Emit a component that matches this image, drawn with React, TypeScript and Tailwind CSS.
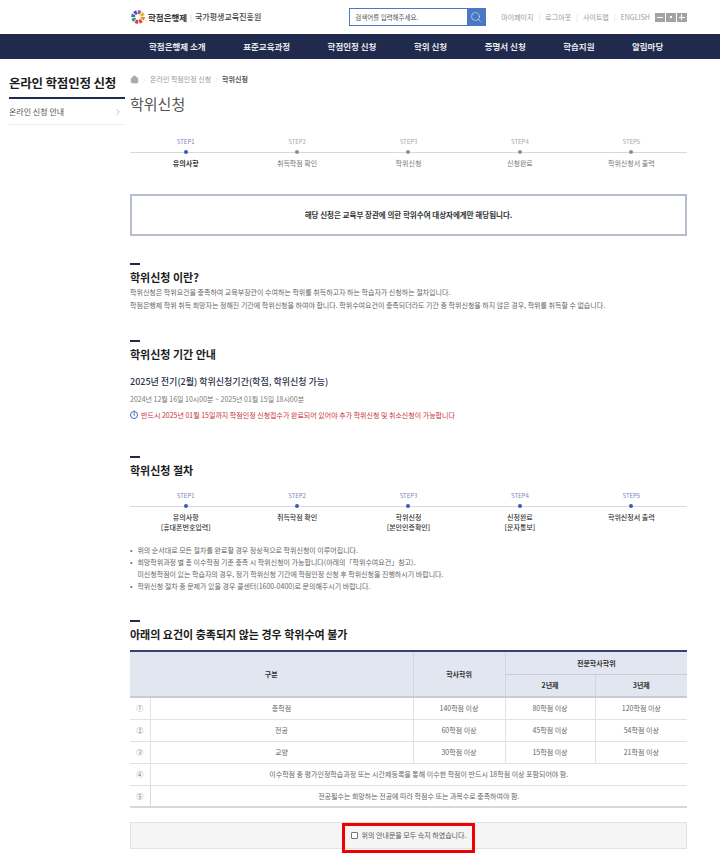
import { ChevronRight, Home, Search } from "lucide-react";

const navItems = ["학점은행제 소개", "표준교육과정", "학점인정 신청", "학위 신청", "증명서 신청", "학습지원", "알림마당"];

const topSteps = ["유의사항", "취득학점 확인", "학위신청", "신청완료", "학위신청서 출력"];

const procedure = [
  ["유의사항", "[휴대폰번호입력]"],
  ["취득학점 확인"],
  ["학위신청", "[본인인증확인]"],
  ["신청완료", "[문자통보]"],
  ["학위신청서 출력"],
];

const petals = ["#6d3fa0", "#8e5bb5", "#e8b31c", "#ef8a1d", "#e2452f", "#d8327a", "#3f9b45", "#2f74c0"];

function Logo() {
  return (
    <svg width="16" height="16" viewBox="0 0 32 32">
      {petals.map((color, i) => (
        <g key={color} transform={`rotate(${i * 45 - 30} 16 16)`}>
          <path d="M12.5 2.5 L19.5 2.5 L18.5 9 L16 11 L13.5 9 Z" fill={color} />
        </g>
      ))}
    </svg>
  );
}

function Heading({ children }: { children: React.ReactNode }) {
  return (
    <div>
      <div className="h-[2px] w-[10px] bg-[#1f2a4d]" />
      <h2 className="mt-[3px] text-[11px] leading-[18px] font-bold text-[#1b1b1b]">{children}</h2>
    </div>
  );
}

function StepRow() {
  return (
    <div className="relative grid grid-cols-5 text-center">
      <div className="absolute left-0 right-0 top-[16px] h-px bg-[#d9d9d9]" />
      {topSteps.map((label, i) => {
        const on = i === 0;
        return (
          <div key={label} className="relative flex flex-col items-center">
            <div className={`text-[6px] leading-[12px] ${on ? "text-[#7d86c0]" : "text-[#a9a9a9]"}`}>STEP{i + 1}</div>
            <div className={`mt-[2px] size-[4px] rounded-full ${on ? "bg-[#2f5fb8]" : "bg-[#8f8f8f]"}`} />
            <div className={`mt-[3px] text-[7px] leading-[12px] ${on ? "font-bold text-[#333]" : "text-[#777]"}`}>{label}</div>
          </div>
        );
      })}
    </div>
  );
}

function ProcedureRow() {
  return (
    <div className="relative grid grid-cols-5 text-center">
      <div className="absolute left-0 right-0 top-[16px] h-px bg-[#d9d9d9]" />
      {procedure.map((lines, i) => (
        <div key={lines[0]} className="relative flex flex-col items-center">
          <div className="text-[6px] leading-[12px] text-[#7d86c0]">STEP{i + 1}</div>
          <div className="mt-[2px] size-[4px] rounded-full bg-[#2f5fb8]" />
          <div className="mt-[4px] text-[7px] leading-[10px] font-medium text-[#333]">
            {lines.map((line) => (
              <div key={line}>{line}</div>
            ))}
          </div>
        </div>
      ))}
    </div>
  );
}

const cell = "border-b border-l border-[#e2e2e2] text-center font-normal text-[#666]";
const head = "border-l border-[#d3d6e0] text-center font-bold text-[#333]";

export default function App() {
  return (
    <div className="h-[868px] w-[720px] overflow-hidden bg-white text-[7px] text-[#666] [font-family:'Noto_Sans_CJK_KR','Noto_Sans',sans-serif]">
      {/* top bar */}
      <header className="flex h-[34px] items-center pl-[130px]">
        <Logo />
        <span className="ml-[2px] text-[8.5px] font-bold text-[#333]">학점은행제</span>
        <span className="mx-[3px] text-[7px] text-[#bbb]">|</span>
        <span className="text-[8px] font-medium text-[#444]">국가평생교육진흥원</span>
        <div className="ml-[88px] flex h-[18px] w-[137px] border border-[#4a78c4]">
          <div className="flex-1 pl-[5px] text-[6.5px] leading-[16px] text-[#555]">검색어를 입력해주세요.</div>
          <div className="flex w-[18px] items-center justify-center bg-[#4a78c4]">
            <Search size={12} strokeWidth={1.25} color="#dbe6f7" />
          </div>
        </div>
        <nav className="ml-[15px] flex items-center text-[7px] text-[#999]">
          <span>마이페이지</span>
          <span className="mx-[5px] text-[#ddd]">|</span>
          <span>로그아웃</span>
          <span className="mx-[5px] text-[#ddd]">|</span>
          <span>사이트맵</span>
          <span className="mx-[5px] text-[#ddd]">|</span>
          <span>ENGLISH</span>
        </nav>
        <div className="ml-[5px] flex gap-px">
          <div className="flex h-[9px] w-[10px] items-center justify-center bg-[#a3a3a3]">
            <div className="h-px w-[6px] bg-white" />
          </div>
          <div className="flex h-[9px] w-[10px] items-center justify-center bg-[#a3a3a3]">
            <div className="size-[2px] bg-white" />
          </div>
          <div className="relative flex h-[9px] w-[10px] items-center justify-center bg-[#a3a3a3]">
            <div className="h-px w-[6px] bg-white" />
            <div className="absolute h-[6px] w-px bg-white" />
          </div>
        </div>
      </header>

      {/* main nav */}
      <div className="flex h-[25px] items-center gap-[37.5px] bg-[#1f2a4d] pl-[149px] text-[8.5px] font-bold text-[#e8eaf0]">
        {navItems.map((item) => (
          <span key={item}>{item}</span>
        ))}
      </div>

      <div className="flex">
        {/* sidebar */}
        <aside className="ml-[9px] w-[116px] pt-[14px]">
          <div className="border-b-2 border-[#1f2a4d] pb-[4px] text-[12.5px] leading-[20px] font-bold tracking-[-0.2px] text-[#1b1b1b]">
            온라인 학점인정 신청
          </div>
          <div className="flex h-[26px] items-center justify-between border-b border-[#eee] pr-[2px] text-[8px] text-[#555]">
            온라인 신청 안내
            <ChevronRight size={10} strokeWidth={1} color="#666" />
          </div>
        </aside>

        {/* content */}
        <main className="ml-[5px] w-[557px]">
          <div className="mt-[13px] flex h-[14px] items-center text-[7px] text-[#999]">
            <Home size={9} fill="#aaa" color="#aaa" />
            <ChevronRight size={7} strokeWidth={1} color="#bbb" className="mx-[2px]" />
            <span>온라인 학점인정 신청</span>
            <ChevronRight size={7} strokeWidth={1} color="#bbb" className="mx-[2px]" />
            <span className="font-bold text-[#555]">학위신청</span>
          </div>
          <h1 className="mt-[7px] text-[15px] leading-[22px] font-normal text-[#555]">학위신청</h1>

          <div className="mt-[21px]">
            <StepRow />
          </div>

          <div className="mt-[25px] flex h-[42px] items-center justify-center border-[2.5px] border-[#b7bccf] text-[7.5px] font-bold text-[#333]">
            해당 신청은 교육부 장관에 의한 학위수여 대상자에게만 해당됩니다.
          </div>

          <section className="mt-[27px]">
            <Heading>학위신청 이란?</Heading>
            <div className="leading-[13px] text-[#666]">
              <p>학위신청은 학위요건을 충족하여 교육부장관이 수여하는 학위를 취득하고자 하는 학습자가 신청하는 절차입니다.</p>
              <p>학점은행제 학위 취득 희망자는 정해진 기간에 학위신청을 하여야 합니다. 학위수여요건이 충족되더라도 기간 중 학위신청을 하지 않은 경우, 학위를 취득할 수 없습니다.</p>
            </div>
          </section>

          <section className="mt-[28px]">
            <Heading>학위신청 기간 안내</Heading>
            <div className="mt-[11px] text-[9px] leading-[16px] font-medium text-[#2a2f4a]">
              2025년 전기(2월) 학위신청기간(학점, 학위신청 가능)
            </div>
            <div className="mt-[2px] leading-[14px] text-[#777]">2024년 12월 16일 10시00분 ~ 2025년 01월 15일 18시00분</div>
            <div className="mt-[2px] flex items-center leading-[14px] text-[#c8323c]">
              <span className="mr-[3px] flex size-[8px] items-center justify-center rounded-full border border-[#3f6fc0] text-[5.5px] leading-none font-bold text-[#3f6fc0]">
                i
              </span>
              반드시 2025년 01월 15일까지 학점인정 신청접수가 완료되어 있어야 추가 학위신청 및 취소신청이 가능합니다
            </div>
          </section>

          <section className="mt-[34px]">
            <Heading>학위신청 절차</Heading>
            <div className="mt-[11px]">
              <ProcedureRow />
            </div>
            <ul className="mt-[12px] leading-[12px] text-[#666]">
              <li className="flex gap-[5px]">
                <span>•</span>위의 순서대로 모든 절차를 완료할 경우 정상적으로 학위신청이 이루어집니다.
              </li>
              <li className="flex gap-[5px]">
                <span>•</span>
                <div>
                  희망학위과정 별 총 이수학점 기준 충족 시 학위신청이 가능합니다(아래의「학위수여요건」참고).
                  <br />
                  미신청학점이 있는 학습자의 경우, 정기 학위신청 기간에 학점인정 신청 후 학위신청을 진행하시기 바랍니다.
                </div>
              </li>
              <li className="flex gap-[5px]">
                <span>•</span>학위신청 절차 중 문제가 있을 경우 콜센터(1600-0400)로 문의해주시기 바랍니다.
              </li>
            </ul>
          </section>

          <section className="mt-[28px]">
            <Heading>아래의 요건이 충족되지 않는 경우 학위수여 불가</Heading>
            <table className="mt-[7px] w-full table-fixed border-collapse border-t-2 border-[#33427a] text-[7px]">
              <colgroup>
                <col className="w-[20px]" />
                <col className="w-[263px]" />
                <col className="w-[92px]" />
                <col className="w-[90px]" />
                <col className="w-[92px]" />
              </colgroup>
              <thead className="bg-[#e2e6f0]">
                <tr className="h-[23px]">
                  <th colSpan={2} rowSpan={2} className="border-b-2 border-[#c9ccd6] text-center font-bold text-[#333]">
                    구분
                  </th>
                  <th rowSpan={2} className={`${head} border-b-2 border-b-[#c9ccd6]`}>
                    학사학위
                  </th>
                  <th colSpan={2} className={`${head} border-b border-b-[#c9ccd6]`}>
                    전문학사학위
                  </th>
                </tr>
                <tr className="h-[23px]">
                  <th className={`${head} border-b-2 border-b-[#c9ccd6]`}>2년제</th>
                  <th className={`${head} border-b-2 border-b-[#c9ccd6]`}>3년제</th>
                </tr>
              </thead>
              <tbody>
                {[
                  ["①", "총학점", "140학점 이상", "80학점 이상", "120학점 이상"],
                  ["②", "전공", "60학점 이상", "45학점 이상", "54학점 이상"],
                  ["③", "교양", "30학점 이상", "15학점 이상", "21학점 이상"],
                ].map((row) => (
                  <tr key={row[0]} className="h-[22px]">
                    <td className="border-b border-[#e2e2e2] text-center text-[#777]">{row[0]}</td>
                    {row.slice(1).map((value) => (
                      <td key={value} className={cell}>
                        {value}
                      </td>
                    ))}
                  </tr>
                ))}
                <tr className="h-[22px]">
                  <td className="border-b border-[#e2e2e2] text-center text-[#777]">④</td>
                  <td colSpan={4} className={cell}>
                    이수학점 중 평가인정학습과정 또는 시간제등록을 통해 이수한 학점이 반드시 18학점 이상 포함되어야 함.
                  </td>
                </tr>
                <tr className="h-[22px]">
                  <td className="border-b-2 border-[#d8d8d8] text-center text-[#777]">⑤</td>
                  <td colSpan={4} className="border-b-2 border-l border-[#d8d8d8] text-center text-[#666]">
                    전공필수는 희망하는 전공에 따라 학점수 또는 과목수로 충족하여야 함.
                  </td>
                </tr>
              </tbody>
            </table>
          </section>

          <div className="relative mt-[14px] flex h-[27px] items-center justify-center border border-[#e2e2e2] bg-[#f5f5f5] text-[7px] text-[#555]">
            <span className="mr-[4px] size-[7px] rounded-[1px] border border-[#777] bg-white" />
            위의 안내문을 모두 숙지 하였습니다.
            <div className="absolute left-[211px] top-0 h-[30px] w-[133px] border-[3px] border-[#f00000]" />
          </div>
        </main>
      </div>
    </div>
  );
}
